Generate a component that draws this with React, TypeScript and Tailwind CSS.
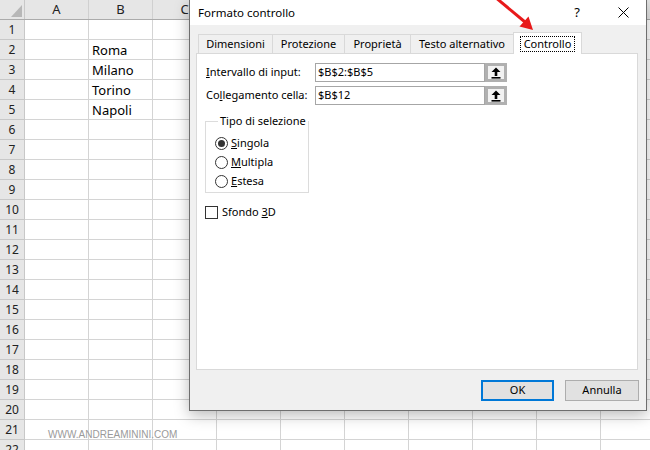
import React from 'react';

const COLS = ['A', 'B', 'C', 'D', 'E', 'F', 'G', 'H', 'I', 'J'];
const ROWS = Array.from({ length: 22 }, (_, i) => i + 1);
const CITIES: Record<number, string> = { 2: 'Roma', 3: 'Milano', 4: 'Torino', 5: 'Napoli' };

function UploadIcon() {
  return (
    <svg width="10" height="12" viewBox="0 0 10 12">
      <path d="M5 0.5 L9.5 5 L6.3 5 L6.3 9 L3.7 9 L3.7 5 L0.5 5 Z" fill="#000" />
      <rect x="0.5" y="10" width="9" height="1.6" fill="#000" />
    </svg>
  );
}

function RefField({ value }: { value: string }) {
  return (
    <div className="flex items-center">
      <div className="w-[170px] h-[19px] border border-[#a6a6a6] bg-white flex items-center pl-[2px] text-black">
        {value}
      </div>
      <div className="w-[22px] h-[19px] border-[3px] border-[#b0b0b0] bg-[#f2f2f2] flex items-center justify-center">
        <UploadIcon />
      </div>
    </div>
  );
}

function Radio({ checked, label }: { checked?: boolean; label: React.ReactNode }) {
  return (
    <div className="flex items-center h-[19px]">
      <div className="w-[13px] h-[13px] rounded-full border border-[#333] bg-white flex items-center justify-center">
        {checked && <div className="w-[7px] h-[7px] rounded-full bg-[#333]" />}
      </div>
      <span className="ml-[3px] text-black">{label}</span>
    </div>
  );
}

function Spreadsheet() {
  return (
    <div className="flex flex-col" style={{ fontFamily: '"Noto Sans", sans-serif' }}>
      {/* column headers */}
      <div className="flex h-[20px] bg-[#e6e6e6] border-b border-[#ababab]">
        <div className="relative w-[25px] shrink-0 border-r border-[#c8c8c8]">
          <svg className="absolute left-0 top-0" width="25" height="20">
            <polygon points="11,17 22,17 22,5" fill="#b7b7b7" />
          </svg>
        </div>
        {COLS.map((c) => (
          <div
            key={c}
            className="w-[64px] shrink-0 border-r border-[#d0d0d0] flex items-center justify-center text-[13px] text-[#222]"
          >
            {c}
          </div>
        ))}
      </div>
      {ROWS.map((r) => (
        <div key={r} className="flex h-[20px]">
          <div className="w-[25px] shrink-0 bg-[#e6e6e6] border-r border-b border-[#c8c8c8] flex items-center justify-center text-[12px] text-[#222]">
            {r}
          </div>
          {COLS.map((c) => (
            <div
              key={c}
              className="w-[64px] shrink-0 border-r border-b border-[#d4d4d4] flex items-end pl-[3px] pb-[1px] text-[13px] text-black leading-none"
            >
              {c === 'B' && CITIES[r] ? <span className="mb-[1px]">{CITIES[r]}</span> : null}
            </div>
          ))}
        </div>
      ))}
    </div>
  );
}

function Dialog() {
  const tabs = [
    { label: 'Dimensioni', w: 'w-[74px]' },
    { label: 'Protezione', w: 'w-[72px]' },
    { label: 'Proprietà', w: 'w-[66px]' },
    { label: 'Testo alternativo', w: 'w-[103px]' },
  ];
  return (
    <div
      className="absolute left-[189px] top-0 w-[458px] h-[411px] bg-[#f0f0f0] border-x border-b border-[#6e6e6e] shadow-[0_4px_14px_rgba(0,0,0,0.28)] flex flex-col text-black text-[11px] whitespace-nowrap"
      style={{ fontFamily: '"Noto Sans", sans-serif' }}
    >
      {/* title bar */}
      <div className="h-[25px] bg-white flex items-center shrink-0">
        <span className="pl-[8px] text-[11.5px]">Formato controllo</span>
        <div className="flex-1" />
        <div className="w-[46px] flex items-center justify-center text-[13px]">?</div>
        <div className="w-[46px] flex items-center justify-center">
          <svg width="11" height="11" viewBox="0 0 11 11">
            <path d="M0.5 0.5 L10.5 10.5 M10.5 0.5 L0.5 10.5" stroke="#000" strokeWidth="1" />
          </svg>
        </div>
      </div>

      <div className="flex flex-col pt-[7px]">
        {/* tabs */}
        <div className="flex items-end h-[21px] pl-[8px]">
          {tabs.map((t) => (
            <div
              key={t.label}
              className={`${t.w} h-[19px] border-t border-l border-[#d9d9d9] flex items-center justify-center`}
            >
              {t.label}
            </div>
          ))}
          <div className="relative z-10 w-[69px] h-[22px] -mb-[1px] bg-white border-t border-x border-[#d9d9d9] flex items-center justify-center">
            <span className="px-[3px] border border-dotted border-black leading-[14px]">Controllo</span>
          </div>
        </div>

        {/* panel */}
        <div className="ml-[6px] w-[442px] h-[317px] bg-white border border-[#d9d9d9] flex flex-col pt-[9px] pl-[9px]">
          <div className="flex items-center">
            <span className="w-[109px]">
              <span className="underline">I</span>ntervallo di input:
            </span>
            <RefField value="$B$2:$B$5" />
          </div>
          <div className="flex items-center mt-[4px]">
            <span className="w-[109px]">
              Co<span className="underline">l</span>legamento cella:
            </span>
            <RefField value="$B$12" />
          </div>

          <fieldset className="-ml-[1px] mt-[8px] w-[104px] h-[80px] border border-[#dcdcdc] pl-[9px]">
            <legend className="ml-[3px] px-[2px]">Tipo di selezione</legend>
            <div className="mt-[4px]">
              <Radio checked label={<><span className="underline">S</span>ingola</>} />
              <Radio label={<><span className="underline">M</span>ultipla</>} />
              <Radio label={<><span className="underline">E</span>stesa</>} />
            </div>
          </fieldset>

          <div className="flex items-center -ml-[1px] mt-[11px]">
            <div className="w-[13px] h-[13px] border border-[#333] bg-white" />
            <span className="ml-[4px]">
              Sfondo <span className="underline">3</span>D
            </span>
          </div>
        </div>

        {/* buttons */}
        <div className="flex justify-end gap-[11px] mt-[10px] pr-[7px]">
          <button className="w-[73px] h-[21px] border-2 border-[#0078d7] bg-[#e1e1e1] flex items-center justify-center">
            OK
          </button>
          <button className="w-[74px] h-[21px] border border-[#adadad] bg-[#e1e1e1] flex items-center justify-center">
            Annulla
          </button>
        </div>
      </div>
    </div>
  );
}

export default function App() {
  return (
    <div className="relative w-[650px] h-[450px] overflow-hidden bg-white">
      <Spreadsheet />
      <div
        className="absolute left-[48px] top-[427px] text-[10px] text-[#9a9a9a]"
        style={{ fontFamily: '"Liberation Sans", Arial, sans-serif' }}
      >
        WWW.ANDREAMININI.COM
      </div>
      <Dialog />
      {/* red arrow */}
      <svg className="absolute left-[485px] top-0" width="55" height="36" viewBox="0 0 55 36">
        <line x1="10" y1="-3" x2="40" y2="22" stroke="#e8191a" strokeWidth="3" />
        <polygon points="48,30 34.5,26.5 43.5,16.5" fill="#e8191a" />
      </svg>
    </div>
  );
}
